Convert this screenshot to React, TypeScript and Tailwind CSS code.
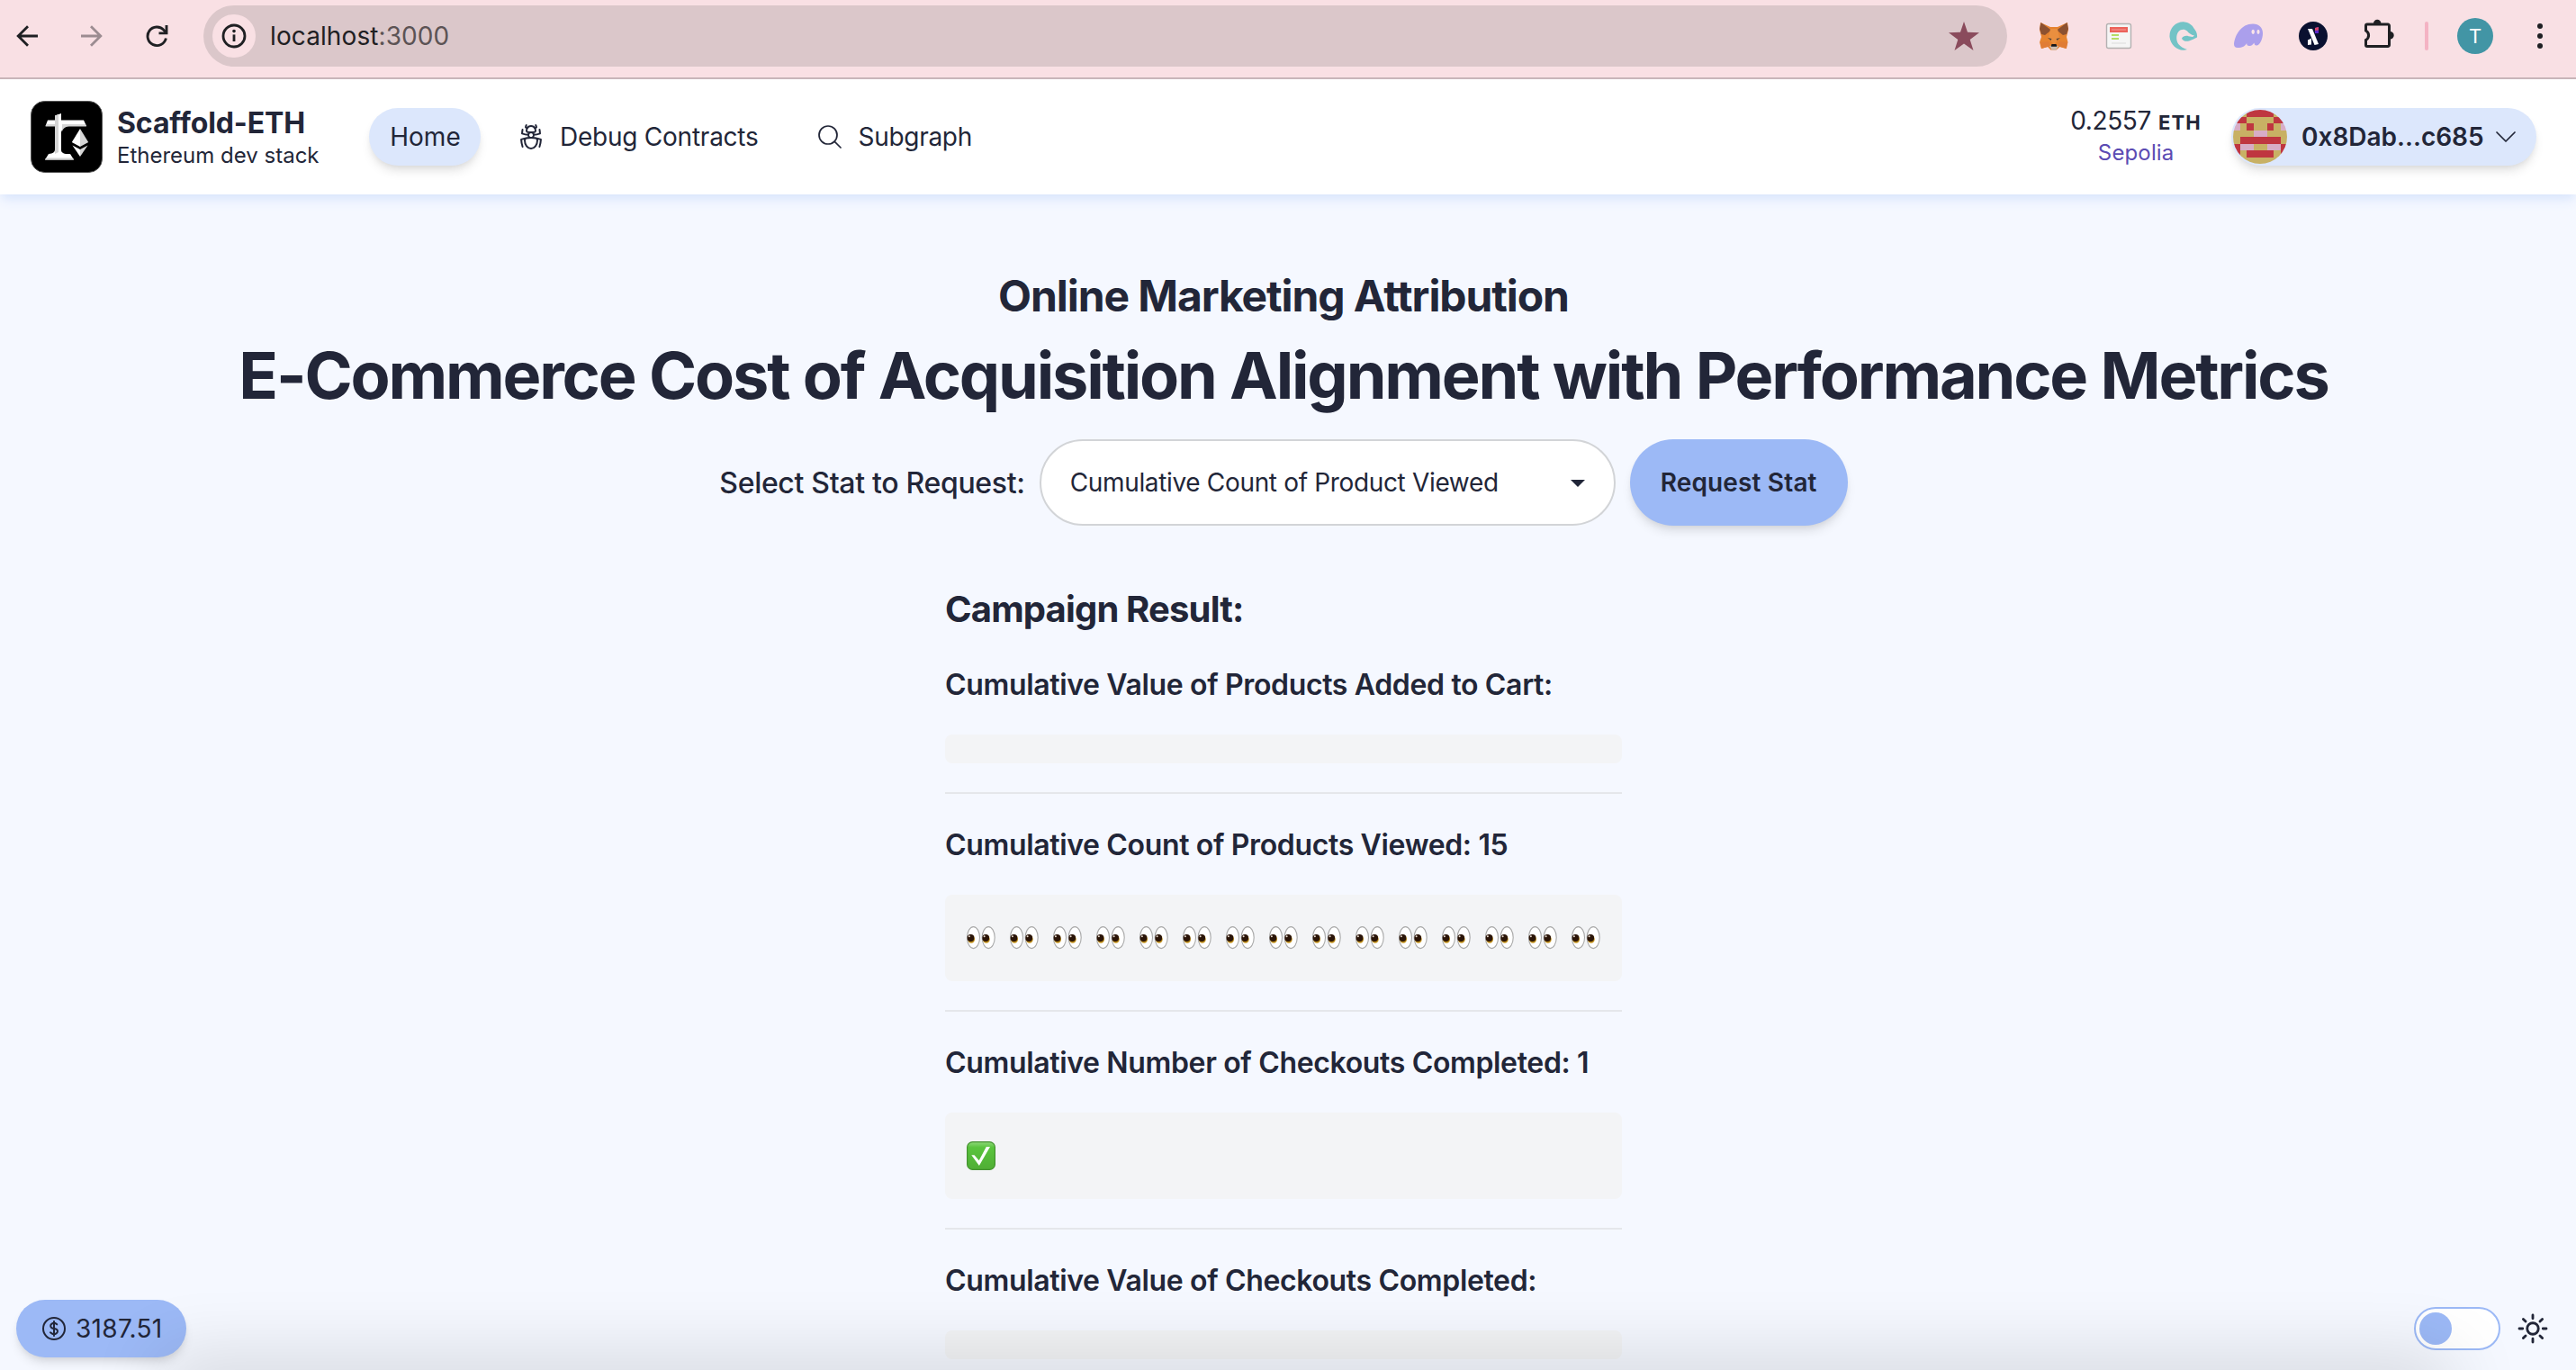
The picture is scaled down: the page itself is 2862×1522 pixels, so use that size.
import React from "react";
import {
  HiOutlineBugAnt,
  HiOutlineMagnifyingGlass,
  HiOutlineChevronDown,
  HiOutlineSun,
  HiOutlineCurrencyDollar,
} from "react-icons/hi2";

function BackArrow() {
  return (
    <svg viewBox="0 0 24 24" className="h-6 w-6 fill-none stroke-current" strokeWidth="2.8">
      <path d="M24 12H2.2M13 1.2 2.2 12 13 22.8" />
    </svg>
  );
}

function Reload() {
  return (
    <svg viewBox="0 0 25 25" className="h-[25px] w-[25px] fill-none stroke-current" strokeWidth="2.9">
      <path d="M22.4 14.5A10.3 10.3 0 1 1 20 5.4L22.5 8" />
      <path d="M23 0v8.9h-8.5" />
    </svg>
  );
}

function InfoIcon() {
  return (
    <svg viewBox="0 0 28 28" className="h-7 w-7">
      <circle cx="14" cy="14" r="12" fill="none" stroke="currentColor" strokeWidth="2.8" />
      <circle cx="14" cy="8.6" r="1.8" fill="currentColor" />
      <path d="M14 12.4v7.6" stroke="currentColor" strokeWidth="2.8" />
    </svg>
  );
}

function Star() {
  return (
    <svg viewBox="0 0 34 32" className="h-8 w-[34px] fill-[#8a4b5c]">
      <path d="M17 0l4 11.8 13 .5-10.3 7.8 3.8 11.9L17 24.6 6.5 32l3.8-11.9L0 12.3l13-.5z" />
    </svg>
  );
}

function Fox() {
  return (
    <svg viewBox="0 0 32 32" className="h-8 w-8">
      <path d="M1 1l11 5h8l11-5 1 8-2 8 1.500 6-2 7-7-2-4 3.500h-6L9 28l-7 2-2-7 2-6-2-8z" fill="#e5832f" />
      <path d="M1.500 1L13 9.500 6 15l-4-1L0 8zM30.500 1L19 9.500 26 15l4-1 2-6z" fill="#8c5130" />
      <path d="M12 8h8l2 10-6 8-6-8z" fill="#ea8f3f" />
      <path d="M1 23l9-1 2 5-3 1-7 2zM31 23l-9-1-2 5 3 1 7 2z" fill="#e07c35" />
      <path d="M9 18l4.500 1-1 2zM23 18l-4.500 1 1 2z" fill="#57453c" />
      <path d="M11 27h10l-2.500 4.500h-5z" fill="#cdbcae" />
      <path d="M13.500 25h5l.8 2.800h-6.600z" fill="#17181a" />
    </svg>
  );
}

function Sheet() {
  return (
    <svg viewBox="0 0 32 32" className="h-8 w-8">
      <rect x="2.500" y="2.500" width="27" height="27" rx="2" fill="#f5f5f5" stroke="#b3b1b1" strokeWidth="1.400" />
      <rect x="6" y="6" width="20" height="6" fill="#ec625b" />
      <path d="M8 9h16" stroke="#f3938d" strokeWidth="1.200" />
      <path d="M8 15h8M8 19h8" stroke="#b5dc66" strokeWidth="2.200" />
      <path d="M8 24h16" stroke="#e3e3e3" strokeWidth="1.500" />
    </svg>
  );
}

function TealMark() {
  return (
    <svg viewBox="0 0 32 32" className="h-8 w-8 fill-[#73c3c6]">
      <path d="M20 31C11 34 1.500 27 .5 17 0 7 8-.5 17 .4c5 .6 9 3.600 10.500 7C30 10 31.500 14 31 17.500c-3 1.500-6 3-9 4-4 1-7-.5-8-2.800 1.500-3 5-3.200 7.500-2.500l4.500.7 2-1.400c-4-1-6-2.500-8-5-3-2.500-7-2-9.500.5-3 4-3 10-.2 14 2.400 3 6 4.800 9.700 6z" />
    </svg>
  );
}

function Ghost() {
  return (
    <svg viewBox="0 0 32 32" className="h-8 w-8">
      <path
        d="M0 25C1 15 8 2.500 21 2.500c7 0 11 4.500 11 10.500 0 6-3 13-6.500 13.500-2.500.2-3-1.500-3-3-1.500 2-3 3.700-5.500 3.500-2 0-3-1.300-2.800-3C12.500 27 9.500 29 4 29c-2.600 0-4-1.500-4-4z"
        fill="#ab9fec"
      />
      <ellipse cx="21.200" cy="11.300" rx="1.700" ry="2.600" fill="#fbe5e9" />
      <ellipse cx="27" cy="11.300" rx="1.500" ry="2.600" fill="#fbe5e9" />
    </svg>
  );
}

function Lambda() {
  return (
    <svg viewBox="0 0 32 32" className="h-8 w-8">
      <circle cx="16" cy="16" r="16" fill="#0a1130" />
      <path d="M10 8h5l7 17-4.500 1z" fill="#fff" />
      <path d="M10 20.500l4-2v7l-4 .5z" fill="#fff" />
      <path d="M18 7l4-1v7h-4z" fill="#5b28c8" />
      <path d="M18 7l4-1v3.500l-4 .5z" fill="#d8446a" />
    </svg>
  );
}

function Puzzle() {
  return (
    <svg viewBox="0 0 36 34" className="h-[34px] w-9">
      <path
        d="M5 6h23a1.500 1.500 0 0 1 1.500 1.500V29A1.500 1.500 0 0 1 28 30.500H5A1.500 1.500 0 0 1 3.500 29v-5.500a6 6 0 0 0 0-10.500V7.500A1.500 1.500 0 0 1 5 6z"
        fill="none"
        stroke="#1f2023"
        strokeWidth="3"
      />
      <path d="M12 5a4.200 4.200 0 0 1 8.400 0zM30.500 14a4.200 4.200 0 0 1 0 8.400z" fill="#1f2023" />
    </svg>
  );
}

function BrowserBar() {
  return (
    <div className="flex h-[88px] shrink-0 items-start border-b-2 border-[#c8b3b7] bg-[#f9e0e4] text-[#1f2023]">
      <div className="flex h-20 w-full items-center pl-[18px] pr-[37px]">
        <BackArrow />
        <div className="ml-12 rotate-180 text-[#9c8c91]">
          <BackArrow />
        </div>
        <div className="ml-12">
          <Reload />
        </div>
        <div className="ml-[39px] flex h-[68px] w-[2004px] items-center rounded-full bg-[#dbc7ca] pl-2.5 pr-[31px]">
          <div className="flex h-12 w-12 items-center justify-center rounded-full bg-[#f9e0e4]">
            <InfoIcon />
          </div>
          <div className="ml-4 text-[28px] tracking-[0.1px]">
            localhost<span className="text-[#5c5355]">:3000</span>
          </div>
          <div className="ml-auto">
            <Star />
          </div>
        </div>
        <div className="ml-9 flex items-center gap-10">
          <Fox />
          <Sheet />
          <TealMark />
          <Ghost />
          <Lambda />
        </div>
        <div className="-mt-1 ml-[39px]">
          <Puzzle />
        </div>
        <div className="ml-[33px] h-8 w-1 rounded-full bg-[#f4b3c3]" />
        <div className="ml-8 flex h-10 w-10 items-center justify-center rounded-full bg-[#4295a5] font-['Roboto'] text-[22px] text-white">
          T
        </div>
        <div className="ml-auto flex flex-col gap-[5px]">
          <span className="h-1.5 w-1.5 rounded-full bg-[#1f2023]" />
          <span className="h-1.5 w-1.5 rounded-full bg-[#1f2023]" />
          <span className="h-1.5 w-1.5 rounded-full bg-[#1f2023]" />
        </div>
      </div>
    </div>
  );
}

function Logo() {
  return (
    <svg viewBox="0 0 80 80" className="h-20 w-20">
      <rect x=".5" y=".5" width="79" height="79" rx="15" fill="#000" stroke="#555" />
      <path d="M19 21.500h40l3 6.500H43c-5 0-8 3-9 7h-7v-7H16.500z" fill="#fff" />
      <path d="M17.500 26h9.500v2.500H16.500zM61 26l1 2.500H43c-4 0-7 2-8 5.500V26z" fill="#d5d5d5" />
      <path d="M27 16.500l7-2.500v41c0 2 2 3.500 5 4h5l4 6.500H16l4-6.500c5-.5 7-2 7-5z" fill="#fff" />
      <path d="M27 16.500l4-1.500v42l-4 2zM17 63.500h30l1 2H16z" fill="#d5d5d5" />
      <path d="M55 31l-9.200 15L55 51z" fill="#fff" />
      <path d="M55 31l9.200 15L55 51z" fill="#d5d5d5" />
      <path d="M46.500 49.500L55 54v8z" fill="#fff" />
      <path d="M63.500 49.500L55 54v8z" fill="#d5d5d5" />
    </svg>
  );
}

const BLOCKIE = ["ttrrrrtt", "rrttttrr", "ptrttrtp", "tttppttt", "trrrrrrt", "rppttppr", "rtrrrrtr", "tttttttt"];
const BLOCK_CLASS: Record<string, string> = {
  t: "bg-[#c8b164]",
  r: "bg-[#bf3640]",
  p: "bg-[#d7adc6]",
};

function Blockie() {
  return (
    <div className="grid h-[60px] w-[60px] shrink-0 grid-cols-8 grid-rows-8 overflow-hidden rounded-full">
      {BLOCKIE.join("")
        .split("")
        .map((c, i) => (
          <span key={i} className={BLOCK_CLASS[c]} />
        ))}
    </div>
  );
}

function Header() {
  return (
    <header className="z-10 flex h-32 shrink-0 items-center bg-white pl-[34px] pr-11 shadow-[0_8px_12px_-2px_#dce7fc,0_4px_8px_-4px_#dce7fc]">
      <div className="flex w-[376px] items-center gap-4">
        <Logo />
        <div className="flex flex-col pt-0.5">
          <span className="text-[32px] font-bold leading-[40px] tracking-[-0.1px]">Scaffold-ETH</span>
          <span className="text-2xl leading-8">Ethereum dev stack</span>
        </div>
      </div>
      <nav className="flex items-center gap-4 text-[28px]">
        <a className="flex h-16 w-[124px] items-center justify-center rounded-full bg-[#dce7fc] pl-px shadow-[0_8px_12px_-2px_rgba(0,0,0,0.1),0_4px_8px_-4px_rgba(0,0,0,0.1)]">
          Home
        </a>
        <a className="flex h-16 items-center gap-4 px-6 tracking-[-0.24px]">
          <HiOutlineBugAnt className="h-8 w-8" />
          Debug Contracts
        </a>
        <a className="-ml-px flex h-16 items-center gap-4 px-6 tracking-[-0.3px]">
          <HiOutlineMagnifyingGlass className="h-8 w-8" strokeWidth={1.3} />
          Subgraph
        </a>
      </nav>
      <div className="ml-auto mr-[33px] flex flex-col items-center">
        <div className="flex items-baseline text-[28px] leading-[34px] tracking-[-0.4px]">
          0.2557
          <span className="ml-2 text-[22px] font-bold leading-[34px] tracking-[1.2px]">ETH</span>
        </div>
        <div className="text-2xl leading-[34px] tracking-[0.15px] text-[#5b4bb3]">Sepolia</div>
      </div>
      <div className="flex h-16 w-[339px] items-center rounded-full bg-[#dce7fc] pl-0.5 shadow-[0_8px_12px_-2px_rgba(0,0,0,0.1),0_4px_8px_-4px_rgba(0,0,0,0.1)]">
        <Blockie />
        <span className="ml-4 text-[28px] font-semibold">0x8Dab...c685</span>
        <HiOutlineChevronDown className="ml-2 h-8 w-8 shrink-0" strokeWidth={1.3} />
      </div>
    </header>
  );
}

function Eyes() {
  return (
    <svg viewBox="0 0 32 32" className="h-8 w-8 shrink-0">
      {[7.5, 24.2].map((x) => (
        <g key={x}>
          <ellipse cx={x} cy="15.600" rx="7" ry="12" fill="#fff" stroke="#a9a9a9" strokeWidth="1.100" />
          <ellipse cx={x - 2.4} cy="17.400" rx="3.900" ry="4.400" fill="#c08f1a" />
          <ellipse cx={x - 3} cy="16" rx="3.900" ry="4" fill="#2a1408" />
          <circle cx={x - 4.6} cy="14.200" r="1" fill="#e8dcd0" />
        </g>
      ))}
    </svg>
  );
}

function CheckMark() {
  return (
    <svg viewBox="0 0 32 32" className="h-8 w-8 shrink-0">
      <defs>
        <linearGradient id="green" x1="0" y1="0" x2="0" y2="1">
          <stop offset="0" stopColor="#8fd87a" />
          <stop offset=".2" stopColor="#5ac43e" />
          <stop offset="1" stopColor="#4fae34" />
        </linearGradient>
      </defs>
      <rect x=".6" y=".6" width="30.800" height="30.800" rx="6" fill="url(#green)" stroke="#43922f" strokeWidth="1.200" />
      <path d="M5.300 15.200h3.200l5.200 6L21.800 6H26L13.900 27z" fill="#fff" />
    </svg>
  );
}

function Stat({ title, children }: { title: string; children?: React.ReactNode }) {
  return (
    <section>
      <h4 className="text-[32px] font-semibold leading-10 tracking-[-0.35px]">{title}</h4>
      <div className="mt-[35px] flex gap-4 rounded-lg bg-[#f3f4f6] px-6 py-4">
        {children && <div className="flex h-16 items-center gap-4">{children}</div>}
      </div>
    </section>
  );
}

function Divider() {
  return <hr className="mb-[37px] mt-8 border-0 border-t-2 border-[#e5e7eb]" />;
}

export default function App() {
  return (
    <div className="relative flex h-[1522px] w-full flex-col overflow-hidden bg-[#f5f8ff] font-['Inter',sans-serif] text-[#222638]">
      <BrowserBar />
      <Header />
      <main className="flex flex-col items-center pr-2.5 pt-[81px]">
        <h2 className="text-5xl font-bold leading-[64px] tracking-[-1.08px]">Online Marketing Attribution</h2>
        <h1 className="whitespace-nowrap text-7xl font-bold leading-[112px] tracking-[-2.18px] [word-spacing:0.6px]">
          E-Commerce Cost of Acquisition Alignment with Performance Metrics
        </h1>
        <div className="mt-[15px] flex h-24 items-center">
          <span className="pt-0.5 text-[32px] font-medium tracking-[-0.32px]">Select Stat to Request:</span>
          <div className="ml-4 flex h-24 w-[640px] items-center justify-between rounded-full border-2 border-[#d2d4d7] bg-white pl-8 pr-8">
            <span className="text-[28px] tracking-[-0.34px]">Cumulative Count of Product Viewed</span>
            <svg viewBox="0 0 16 8" className="mt-0.5 h-2 w-4 fill-[#212638]">
              <path d="M0 0h16L8 8z" />
            </svg>
          </div>
          <button className="ml-4 h-24 w-[242px] rounded-full bg-[#9cb9f6] text-[28px] font-semibold tracking-[0.15px] shadow-[0_8px_12px_-2px_rgba(0,0,0,0.1),0_4px_8px_-4px_rgba(0,0,0,0.1)]">
            Request Stat
          </button>
        </div>
        <div className="mt-[65px] w-[752px]">
          <h3 className="mb-9 text-[40px] font-bold leading-[56px] tracking-[-0.84px]">Campaign Result:</h3>
          <Stat title="Cumulative Value of Products Added to Cart:" />
          <Divider />
          <Stat title="Cumulative Count of Products Viewed: 15">
            {Array.from({ length: 15 }, (_, i) => (
              <Eyes key={i} />
            ))}
          </Stat>
          <Divider />
          <Stat title="Cumulative Number of Checkouts Completed: 1">
            <CheckMark />
          </Stat>
          <Divider />
          <Stat title="Cumulative Value of Checkouts Completed:" />
        </div>
      </main>
      <div className="absolute bottom-[14px] left-[18px] flex h-16 w-[189px] items-center rounded-full bg-[#9cb9f6] pl-[26px] shadow-[0_8px_12px_-2px_rgba(0,0,0,0.1),0_4px_8px_-4px_rgba(0,0,0,0.1)]">
        <HiOutlineCurrencyDollar className="h-8 w-8" />
        <span className="ml-2 text-[28px] tracking-[0.3px]">3187.51</span>
      </div>
      <div className="absolute bottom-[22px] right-7 flex items-center">
        <div className="mr-4 flex h-12 w-24 items-center rounded-full border-2 border-[#9cb9f6] bg-white pl-1">
          <div className="h-9 w-9 rounded-full bg-[#9cb9f6]" />
        </div>
        <HiOutlineSun className="h-10 w-10" strokeWidth={1.7} />
      </div>
      <div className="pointer-events-none absolute -bottom-10 left-[190px] right-[150px] h-10 shadow-[0_0_80px_12px_rgba(0,0,0,0.15)]" />
    </div>
  );
}
